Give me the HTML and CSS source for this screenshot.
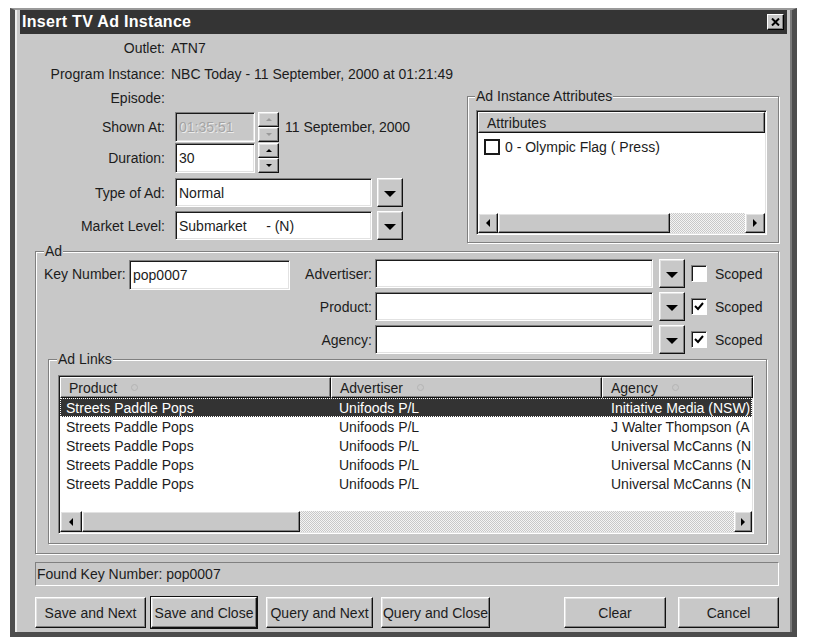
FILE: index.html
```html
<!DOCTYPE html>
<html lang="en">
<head>
    <meta charset="UTF-8">
    <title>Insert TV Ad Instance</title>
    <link rel="stylesheet" href="styles.css">
</head>
<body>
    <div class="window">
        <div class="frame">
            <div class="titlebar">
                <span class="title">Insert TV Ad Instance</span>
                <span class="close">
                    <svg width="9" height="8" viewBox="0 0 9 8"><path d="M1 0.5 L8 7.5 M8 0.5 L1 7.5" stroke="#000" stroke-width="2"/></svg>
                </span>
            </div>
            <div class="content">
                <div class="info-row"><span class="lbl">Outlet:</span><span class="val">ATN7</span></div>
                <div class="info-row"><span class="lbl">Program Instance:</span><span class="val">NBC Today - 11 September, 2000 at 01:21:49</span></div>

                <div class="top">
                    <div class="fields">
                        <div class="info-row episode"><span class="lbl">Episode:</span></div>
                        <div class="frow shown">
                            <span class="lbl">Shown At:</span>
                            <span class="field small disabled">01:35:51</span>
                            <span class="spin disabled">
                                <span class="raised"><i class="tri up"></i></span>
                                <span class="raised"><i class="tri down"></i></span>
                            </span>
                            <span class="date">11 September, 2000</span>
                        </div>
                        <div class="frow duration">
                            <span class="lbl">Duration:</span>
                            <span class="field small">30</span>
                            <span class="spin">
                                <span class="raised"><i class="tri up"></i></span>
                                <span class="raised"><i class="tri down"></i></span>
                            </span>
                        </div>
                        <div class="frow combo-row type">
                            <span class="lbl">Type of Ad:</span>
                            <span class="field wide">Normal</span>
                            <span class="drop raised"><i class="tri big"></i></span>
                        </div>
                        <div class="frow combo-row market">
                            <span class="lbl">Market Level:</span>
                            <span class="field wide">Submarket&nbsp;&nbsp;&nbsp;&nbsp;&nbsp;- (N)</span>
                            <span class="drop raised"><i class="tri big"></i></span>
                        </div>
                    </div>

                    <fieldset class="group attrs">
                        <legend>Ad Instance Attributes</legend>
                        <div class="listview attr-list">
                            <div class="lv-head">
                                <span class="hcell full">Attributes</span>
                            </div>
                            <div class="lv-body">
                                <div class="attr-item"><span class="lv-check"></span>0 - Olympic Flag ( Press)</div>
                            </div>
                            <div class="hscroll">
                                <span class="sbtn raised"><i class="tri left"></i></span>
                                <span class="thumb raised attr-thumb"></span>
                                <span class="track"></span>
                                <span class="sbtn raised"><i class="tri right"></i></span>
                            </div>
                        </div>
                    </fieldset>
                </div>

                <fieldset class="group ad">
                    <legend>Ad</legend>
                    <div class="ad-top">
                        <div class="key">
                            <span class="key-lbl">Key Number:</span>
                            <span class="field key-input">pop0007</span>
                        </div>
                        <div class="ad-fields">
                            <span class="alb">Advertiser:</span>
                            <span class="field ad-input"></span>
                            <span class="drop raised"><i class="tri big"></i></span>
                            <span class="check"></span>
                            <span class="scoped">Scoped</span>

                            <span class="alb">Product:</span>
                            <span class="field ad-input"></span>
                            <span class="drop raised"><i class="tri big"></i></span>
                            <span class="check">
                                <svg width="10" height="9" viewBox="0 0 10 9"><path d="M1 4 L4 7 L9 1" stroke="#000" stroke-width="2" fill="none"/></svg>
                            </span>
                            <span class="scoped">Scoped</span>

                            <span class="alb">Agency:</span>
                            <span class="field ad-input"></span>
                            <span class="drop raised"><i class="tri big"></i></span>
                            <span class="check">
                                <svg width="10" height="9" viewBox="0 0 10 9"><path d="M1 4 L4 7 L9 1" stroke="#000" stroke-width="2" fill="none"/></svg>
                            </span>
                            <span class="scoped">Scoped</span>
                        </div>
                    </div>

                    <fieldset class="group links">
                        <legend>Ad Links</legend>
                        <div class="listview link-list">
                            <div class="lv-head cols">
                                <span class="hcell">Product<i class="sort"></i></span>
                                <span class="hcell">Advertiser<i class="sort"></i></span>
                                <span class="hcell">Agency<i class="sort"></i></span>
                            </div>
                            <div class="lv-body">
                                <div class="lrow cols selected"><span>Streets Paddle Pops</span><span>Unifoods P/L</span><span>Initiative Media (NSW)</span></div>
                                <div class="lrow cols"><span>Streets Paddle Pops</span><span>Unifoods P/L</span><span>J Walter Thompson (A</span></div>
                                <div class="lrow cols"><span>Streets Paddle Pops</span><span>Unifoods P/L</span><span>Universal McCanns (N</span></div>
                                <div class="lrow cols"><span>Streets Paddle Pops</span><span>Unifoods P/L</span><span>Universal McCanns (N</span></div>
                                <div class="lrow cols"><span>Streets Paddle Pops</span><span>Unifoods P/L</span><span>Universal McCanns (N</span></div>
                            </div>
                            <div class="hscroll">
                                <span class="sbtn raised"><i class="tri left"></i></span>
                                <span class="thumb raised link-thumb"></span>
                                <span class="track"></span>
                                <span class="sbtn raised"><i class="tri right"></i></span>
                            </div>
                        </div>
                    </fieldset>
                </fieldset>

                <div class="status">Found Key Number: pop0007</div>

                <div class="buttons">
                    <span class="btn raised b-save-next">Save and Next</span>
                    <span class="btn raised default b-save-close">Save and Close</span>
                    <span class="btn raised b-query-next">Query and Next</span>
                    <span class="btn raised b-query-close">Query and Close</span>
                    <span class="spacer"></span>
                    <span class="btn raised b-clear">Clear</span>
                    <span class="btn raised b-cancel">Cancel</span>
                </div>
            </div>
        </div>
    </div>
</body>
</html>
```

FILE: styles.css
```css
:root {
    --face: #c8c8c8;
    --shadow: #808080;
    --light: #e2e2e2;
    --hi: #ffffff;
    --text: #1c1c1c;
    --title: #343434;
    --frame: #4d4d4d;
}

body {
    margin: 0;
    background: #fff;
    font-family: "Liberation Sans", Arial, sans-serif;
    font-size: 14px;
    color: var(--text);
}

.window {
    width: 787px;
    margin: 8px 0 0 10px;
    box-sizing: border-box;
    border-top: 2px solid #9a9a9a;
    border-left: 5px solid var(--frame);
    border-right: 5px solid var(--frame);
    border-bottom: 5px solid var(--frame);
    background: var(--face);
}
.frame {
    border-left: 2px solid #ececec;
    border-right: 2px solid #7a7a7a;
    padding: 0 3px;
}

.titlebar {
    height: 24px;
    background: var(--title);
    display: flex;
    align-items: center;
    justify-content: space-between;
    padding: 0 3px 0 2px;
}
.title {
    color: #fff;
    font-weight: bold;
    font-size: 16px;
    letter-spacing: 0.3px;
}
.close {
    width: 17px;
    height: 16px;
    box-sizing: border-box;
    background: var(--face);
    border: 1px solid;
    border-color: var(--hi) #000 #000 var(--hi);
    box-shadow: inset -1px -1px 0 var(--shadow);
    display: flex;
    align-items: center;
    justify-content: center;
}

.content {
    padding: 1px 8px 4px 15px;
}

/* label rows */
.info-row {
    height: 26px;
    display: flex;
    align-items: center;
}
.info-row.episode {
    height: 22px;
}
.lbl {
    width: 130px;
    flex: none;
    text-align: right;
}
.val {
    margin-left: 6px;
}

.top {
    display: flex;
}
.fields {
    flex: 1;
}
.frow {
    display: flex;
    align-items: center;
}
.frow .lbl {
    margin-right: 10px;
}
.shown { margin-top: 3px; }
.duration { margin-top: 1px; }
.type { margin-top: 5px; }
.market { margin-top: 4px; }

/* sunken edit box */
.field {
    box-sizing: border-box;
    height: 29px;
    background: #fff;
    border: 1px solid;
    border-color: var(--shadow) var(--hi) var(--hi) var(--shadow);
    box-shadow: inset 1px 1px 0 #1a1a1a, inset -1px -1px 0 var(--light);
    padding: 0 3px;
    display: flex;
    align-items: center;
    white-space: pre;
    overflow: hidden;
}
.field.small {
    width: 80px;
    height: 30px;
}
.field.disabled {
    background: var(--face);
    color: #a4a4a4;
    text-shadow: 1px 1px 0 #ececec;
}
.field.wide {
    width: 197px;
}

/* raised bevel */
.raised {
    box-sizing: border-box;
    background: var(--face);
    border: 1px solid;
    border-color: var(--hi) #111 #111 var(--hi);
    box-shadow: inset -1px -1px 0 var(--shadow), inset 1px 1px 0 var(--light);
    display: flex;
    align-items: center;
    justify-content: center;
}

.spin {
    width: 21px;
    height: 30px;
    margin-left: 3px;
    display: flex;
    flex-direction: column;
}
.spin .raised {
    flex: 1;
}
.spin.disabled .tri {
    border-top-color: #9a9a9a;
    border-bottom-color: #9a9a9a;
}
.date {
    margin-left: 6px;
}

.drop {
    width: 26px;
    height: 29px;
    margin-left: 5px;
}

/* triangles */
.tri {
    width: 0;
    height: 0;
    border-left: 3px solid transparent;
    border-right: 3px solid transparent;
}
.tri.up {
    border-bottom: 3px solid #000;
}
.tri.down {
    border-top: 3px solid #000;
}
.tri.big {
    border-left-width: 6px;
    border-right-width: 6px;
    border-top: 6px solid #000;
    margin-top: 2px;
}
.tri.left, .tri.right {
    border-top: 4px solid transparent;
    border-bottom: 4px solid transparent;
    border-left: 0;
    border-right: 0;
}
.tri.left {
    border-right: 4px solid #000;
}
.tri.right {
    border-left: 4px solid #000;
}

/* group boxes */
.group {
    margin: 0;
    min-width: 0;
    border: 1px solid var(--shadow);
    box-shadow: 1px 1px 0 var(--hi), inset 1px 1px 0 var(--hi);
}
.group legend {
    line-height: 16px;
    padding: 0 1px;
    background: var(--face);
}

.attrs {
    width: 312px;
    box-sizing: border-box;
    margin-top: 1px;
    padding: 6px 11px 7px 8px;
}
.attrs legend {
    margin-left: -1px;
}

.ad {
    padding: 0 9px 9px 8px;
}
.ad legend {
    margin-left: 0;
}

.links {
    margin: -3px 2px 0 4px;
    padding: 8px 12px 9px 9px;
}
.links legend {
    margin-left: -1px;
}

/* ad fields */
.ad-top {
    display: flex;
}
.key {
    display: flex;
    align-items: flex-start;
    width: 246px;
}
.key-lbl {
    width: 85px;
    line-height: 30px;
}
.key-input {
    width: 161px;
    height: 30px;
    margin-top: 1px;
}
.ad-fields {
    display: grid;
    grid-template-columns: 85px 284px 32px 24px auto;
    grid-auto-rows: 29px;
    row-gap: 4px;
    align-items: center;
}
.alb {
    text-align: right;
    padding-right: 3px;
}
.ad-input {
    width: 278px;
}
.ad-fields .drop {
    margin-left: 0;
}
.check {
    width: 16px;
    height: 17px;
    box-sizing: border-box;
    background: #fff;
    border: 1px solid;
    border-color: var(--shadow) var(--hi) var(--hi) var(--shadow);
    box-shadow: inset 1px 1px 0 #1a1a1a;
    display: flex;
    align-items: center;
    justify-content: center;
}

/* list views */
.listview {
    box-sizing: border-box;
    background: #fff;
    border: 1px solid;
    border-color: var(--shadow) var(--hi) var(--hi) var(--shadow);
    box-shadow: inset 1px 1px 0 #1a1a1a, inset -1px -1px 0 var(--light);
    padding: 1px;
    display: flex;
    flex-direction: column;
    overflow: hidden;
}
.attr-list {
    height: 125px;
}
.link-list {
    height: 159px;
}
.lv-head {
    height: 21px;
    display: flex;
    flex: none;
}
.hcell {
    box-sizing: border-box;
    height: 21px;
    background: var(--face);
    border: 1px solid;
    border-color: var(--hi) #111 #111 var(--hi);
    box-shadow: inset -1px -1px 0 var(--shadow);
    padding-left: 8px;
    display: flex;
    align-items: center;
    white-space: nowrap;
    overflow: hidden;
}
.hcell.full {
    flex: 1;
}
.cols {
    display: grid;
    grid-template-columns: 271px 271px 151px;
}
.sort {
    width: 5px;
    height: 5px;
    border: 1px solid #b4b4b4;
    border-radius: 50%;
    margin-left: 14px;
}
.lv-body {
    flex: 1;
}
.attr-item {
    display: flex;
    align-items: center;
    height: 22px;
    margin-top: 3px;
    padding-left: 6px;
}
.lv-check {
    width: 16px;
    height: 16px;
    box-sizing: border-box;
    border: 2px solid #1a1a1a;
    margin-right: 5px;
}
.lrow {
    height: 19px;
    align-items: center;
    white-space: nowrap;
    box-sizing: border-box;
}
.lrow span {
    overflow: hidden;
}
.lrow span:nth-child(1) { padding-left: 6px; }
.lrow span:nth-child(2) { padding-left: 8px; }
.lrow span:nth-child(3) { padding-left: 9px; }
.lrow.selected {
    background: #333;
    color: #fff;
    outline: 1px dotted #fff;
    outline-offset: -1px;
}

.hscroll {
    display: flex;
    height: 20px;
    flex: none;
}
.link-list .hscroll {
    height: 21px;
}
.sbtn {
    width: 20px;
    flex: none;
}
.link-list .sbtn:first-child {
    width: 22px;
}
.link-list .sbtn:last-child {
    width: 18px;
}
.thumb {
    flex: none;
}
.attr-thumb {
    width: 172px;
}
.link-thumb {
    width: 218px;
}
.track {
    flex: 1;
    background: repeating-conic-gradient(#c8c8c8 0 25%, #f4f4f4 0 50%) 0 0 / 2px 2px;
}

/* status and buttons */
.status {
    margin-top: 8px;
    height: 24px;
    box-sizing: border-box;
    border: 1px solid;
    border-color: var(--shadow) var(--hi) var(--hi) var(--shadow);
    padding-left: 1px;
    display: flex;
    align-items: center;
}
.buttons {
    margin-top: 11px;
    display: flex;
}
.btn {
    height: 31px;
    white-space: nowrap;
}
.btn.default {
    outline: 1px solid #111;
}
.spacer {
    flex: 1;
}
.b-save-next { width: 111px; }
.b-save-close { width: 106px; margin-left: 5px; }
.b-query-next { width: 107px; margin-left: 9px; }
.b-query-close { width: 109px; margin-left: 8px; }
.b-clear { width: 102px; }
.b-cancel { width: 101px; margin-left: 12px; }
```
